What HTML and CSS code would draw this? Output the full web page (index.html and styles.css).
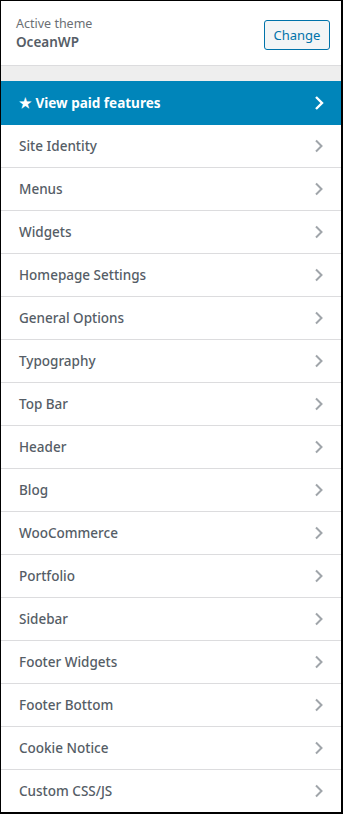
FILE: index.html
```html
<!DOCTYPE html>
<html>
<head>
<meta charset="utf-8">
<link rel="stylesheet" href="styles.css">
</head>
<body>
<div class="panel">
  <div class="theme">
    <div class="theme-info">
      <div class="theme-label">Active theme</div>
      <div class="theme-name">OceanWP</div>
    </div>
    <button class="change-btn">Change</button>
  </div>
  <div class="spacer"></div>
  <div class="row paid">
    <span>★ View paid features</span>
    <svg class="chev" width="10" height="16" viewBox="0 0 10 16"><path d="M2 2 L8 8 L2 14" fill="none" stroke="currentColor" stroke-width="2.4"/></svg>
  </div>
  <ul class="list">
    <li class="row"><span>Site Identity</span><svg class="chev" width="10" height="14" viewBox="0 0 10 14"><path d="M2 1.5 L7.5 7 L2 12.5" fill="none" stroke="currentColor" stroke-width="2"/></svg></li>
    <li class="row"><span>Menus</span><svg class="chev" width="10" height="14" viewBox="0 0 10 14"><path d="M2 1.5 L7.5 7 L2 12.5" fill="none" stroke="currentColor" stroke-width="2"/></svg></li>
    <li class="row"><span>Widgets</span><svg class="chev" width="10" height="14" viewBox="0 0 10 14"><path d="M2 1.5 L7.5 7 L2 12.5" fill="none" stroke="currentColor" stroke-width="2"/></svg></li>
    <li class="row"><span>Homepage Settings</span><svg class="chev" width="10" height="14" viewBox="0 0 10 14"><path d="M2 1.5 L7.5 7 L2 12.5" fill="none" stroke="currentColor" stroke-width="2"/></svg></li>
    <li class="row"><span>General Options</span><svg class="chev" width="10" height="14" viewBox="0 0 10 14"><path d="M2 1.5 L7.5 7 L2 12.5" fill="none" stroke="currentColor" stroke-width="2"/></svg></li>
    <li class="row"><span>Typography</span><svg class="chev" width="10" height="14" viewBox="0 0 10 14"><path d="M2 1.5 L7.5 7 L2 12.5" fill="none" stroke="currentColor" stroke-width="2"/></svg></li>
    <li class="row"><span>Top Bar</span><svg class="chev" width="10" height="14" viewBox="0 0 10 14"><path d="M2 1.5 L7.5 7 L2 12.5" fill="none" stroke="currentColor" stroke-width="2"/></svg></li>
    <li class="row"><span>Header</span><svg class="chev" width="10" height="14" viewBox="0 0 10 14"><path d="M2 1.5 L7.5 7 L2 12.5" fill="none" stroke="currentColor" stroke-width="2"/></svg></li>
    <li class="row"><span>Blog</span><svg class="chev" width="10" height="14" viewBox="0 0 10 14"><path d="M2 1.5 L7.5 7 L2 12.5" fill="none" stroke="currentColor" stroke-width="2"/></svg></li>
    <li class="row"><span>WooCommerce</span><svg class="chev" width="10" height="14" viewBox="0 0 10 14"><path d="M2 1.5 L7.5 7 L2 12.5" fill="none" stroke="currentColor" stroke-width="2"/></svg></li>
    <li class="row"><span>Portfolio</span><svg class="chev" width="10" height="14" viewBox="0 0 10 14"><path d="M2 1.5 L7.5 7 L2 12.5" fill="none" stroke="currentColor" stroke-width="2"/></svg></li>
    <li class="row"><span>Sidebar</span><svg class="chev" width="10" height="14" viewBox="0 0 10 14"><path d="M2 1.5 L7.5 7 L2 12.5" fill="none" stroke="currentColor" stroke-width="2"/></svg></li>
    <li class="row"><span>Footer Widgets</span><svg class="chev" width="10" height="14" viewBox="0 0 10 14"><path d="M2 1.5 L7.5 7 L2 12.5" fill="none" stroke="currentColor" stroke-width="2"/></svg></li>
    <li class="row"><span>Footer Bottom</span><svg class="chev" width="10" height="14" viewBox="0 0 10 14"><path d="M2 1.5 L7.5 7 L2 12.5" fill="none" stroke="currentColor" stroke-width="2"/></svg></li>
    <li class="row"><span>Cookie Notice</span><svg class="chev" width="10" height="14" viewBox="0 0 10 14"><path d="M2 1.5 L7.5 7 L2 12.5" fill="none" stroke="currentColor" stroke-width="2"/></svg></li>
    <li class="row"><span>Custom CSS/JS</span><svg class="chev" width="10" height="14" viewBox="0 0 10 14"><path d="M2 1.5 L7.5 7 L2 12.5" fill="none" stroke="currentColor" stroke-width="2"/></svg></li>
  </ul>
</div>
</body>
</html>
```

FILE: styles.css
```css
html, body {
  margin: 0;
  padding: 0;
  background: #000;
}
body {
  font-family: "Noto Sans", "Open Sans", sans-serif;
}
.panel {
  box-sizing: border-box;
  width: 343px;
  height: 814px;
  border-style: solid;
  border-color: #000;
  border-width: 1px 2px 2px 1px;
  background: #fff;
  overflow: hidden;
}
.theme {
  display: flex;
  align-items: center;
  justify-content: space-between;
  height: 64px;
  padding: 0 11px 0 15px;
  border-bottom: 1px solid #dcdcde;
  background: #fff;
}
.theme-info {
  display: flex;
  flex-direction: column;
  margin-top: -1px;
}
.theme-label {
  font-size: 12.5px;
  color: #6b6f74;
  line-height: 18px;
}
.theme-name {
  font-size: 13.5px;
  font-weight: 600;
  color: #555d66;
  line-height: 18px;
}
.change-btn {
  font-family: inherit;
  font-size: 13px;
  color: #0073aa;
  background: #f3f5f6;
  border: 1px solid #0073aa;
  border-radius: 3px;
  width: 66px;
  height: 30px;
  padding: 0;
  margin-top: 4px;
}
.spacer {
  height: 15px;
  background: #eeeeee;
}
.list {
  list-style: none;
  margin: 0;
  padding: 0;
}
.row {
  box-sizing: border-box;
  display: flex;
  align-items: center;
  justify-content: space-between;
  height: 43px;
  padding: 0 17px 0 18px;
  border-bottom: 1px solid #dcdcde;
  font-size: 13.5px;
  font-weight: 500;
  color: #555d66;
  background: #fff;
}
.row .chev {
  color: #a0a5aa;
}
.paid {
  height: 44px;
  background: #0085ba;
  color: #fff;
  font-weight: 700;
  border-bottom: none;
}
.paid .chev {
  color: #fff;
}
```
